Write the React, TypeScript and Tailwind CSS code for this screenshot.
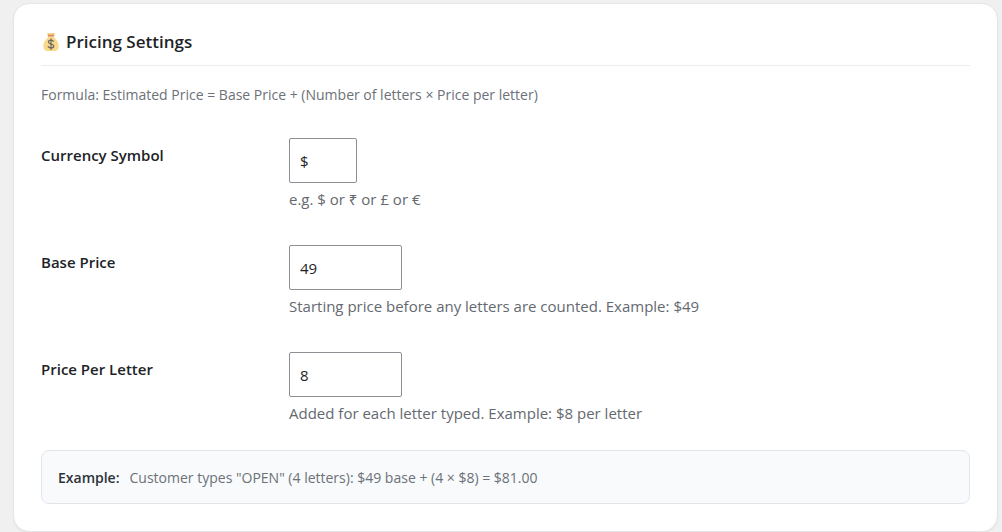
import { useState } from 'react';

type FieldProps = {
  id: string;
  label: string;
  hint: string;
  value: string;
  inputClass: string;
  onChange: (value: string) => void;
};

function MoneyBag() {
  return (
    <svg viewBox="0 0 18 20" className="h-5 w-[18px] shrink-0" aria-hidden="true">
      <path d="M6 1h8l-1.300 3.500H7.300z" fill="#f3cf8a" />
      <path
        d="M7.200 4.800h5.600c.8 1.600 4.900 4.600 4.900 9.200 0 3.400-1.700 5-4 5H6.300c-2.300 0-4-1.600-4-5 0-4.600 4.100-7.600 4.900-9.200z"
        fill="#fbd98a"
      />
      <rect x="6.800" y="2.800" width="6.400" height="1.800" rx="0.500" fill="#d98a5c" />
      <path
        d="M12.400 9.300c-.6-.8-1.400-1.200-2.400-1.200-1.600 0-2.600.8-2.600 2 0 2.600 5.400 1.300 5.400 3.900 0 1.200-1.200 2-2.700 2-1.300 0-2.400-.5-2.900-1.400M10 6.800v10.600"
        fill="none"
        stroke="#6b6a60"
        strokeWidth="1.200"
        strokeLinecap="round"
      />
    </svg>
  );
}

function Field({ id, label, hint, value, inputClass, onChange }: FieldProps) {
  return (
    <div className="grid grid-cols-[232px_1fr] gap-4">
      <label
        htmlFor={ id }
        className="pt-[7px] text-[15px] leading-5 font-semibold text-[#1d2327]"
      >
        { label }
      </label>
      <div>
        <input
          type="text"
          id={ id }
          aria-describedby={ `${id}-hint` }
          className={ `block h-[45px] rounded-xs border border-[#8c8f94] bg-white px-2.5
          text-[15px] text-[#1d2327] ${inputClass}` }
          value={ value }
          onChange={ (event) => onChange(event.target.value) }
        />
        <p id={ `${id}-hint` } className="mt-1 text-[15px] leading-6 text-[#646970]">
          { hint }
        </p>
      </div>
    </div>
  );
}

function PricingSettings() {
  const [symbol, setSymbol] = useState('$');
  const [basePrice, setBasePrice] = useState('49');
  const [letterPrice, setLetterPrice] = useState('8');

  const word = 'OPEN';
  const total = (Number(basePrice) + word.length * Number(letterPrice)).toFixed(2);

  return (
    <section
      className="rounded-2xl border border-[#e5e5e7] bg-white px-[27px] pt-[26px] pb-[27px]
      shadow-xs"
    >
      <h2
        className="flex items-center gap-[7px] border-b border-[#ececee] pb-[11px] text-[17px]
        leading-6 font-semibold text-[#1d2327]"
      >
        <MoneyBag />
        Pricing Settings
      </h2>
      <p className="mt-[19px] text-sm leading-5 text-[#6c7178]">
        Formula: Estimated Price = Base Price + (Number of letters × Price per letter)
      </p>

      <div className="mt-[33px] flex flex-col gap-[34px]">
        <Field
          id="currency-symbol"
          label="Currency Symbol"
          hint="e.g. $ or ₹ or £ or €"
          value={ symbol }
          inputClass="w-[68px]"
          onChange={ setSymbol }
        />
        <Field
          id="base-price"
          label="Base Price"
          hint="Starting price before any letters are counted. Example: $49"
          value={ basePrice }
          inputClass="w-[113px]"
          onChange={ setBasePrice }
        />
        <Field
          id="price-per-letter"
          label="Price Per Letter"
          hint="Added for each letter typed. Example: $8 per letter"
          value={ letterPrice }
          inputClass="w-[113px]"
          onChange={ setLetterPrice }
        />
      </div>

      <div
        className="mt-[25px] flex items-center gap-2.5 rounded-lg border border-[#e2e6ea]
        bg-[#f8fafc] px-4 pt-[17px] pb-[15px] text-sm leading-5 text-[#6c7178]"
      >
        <strong className="font-semibold text-[#2c3338]">Example:</strong>
        <span>
          { `Customer types "${word}" (${word.length} letters): ${symbol}${basePrice} base + (${word.length} × ${symbol}${letterPrice}) = ${symbol}${total}` }
        </span>
      </div>
    </section>
  );
}

export default function App() {
  return (
    <main
      className="min-h-screen bg-[#f0f0f1] pt-[3px] pr-1 pl-[13px]
      font-['Segoe_UI','Open_Sans','Noto_Sans',sans-serif]"
    >
      <PricingSettings />
    </main>
  );
}
